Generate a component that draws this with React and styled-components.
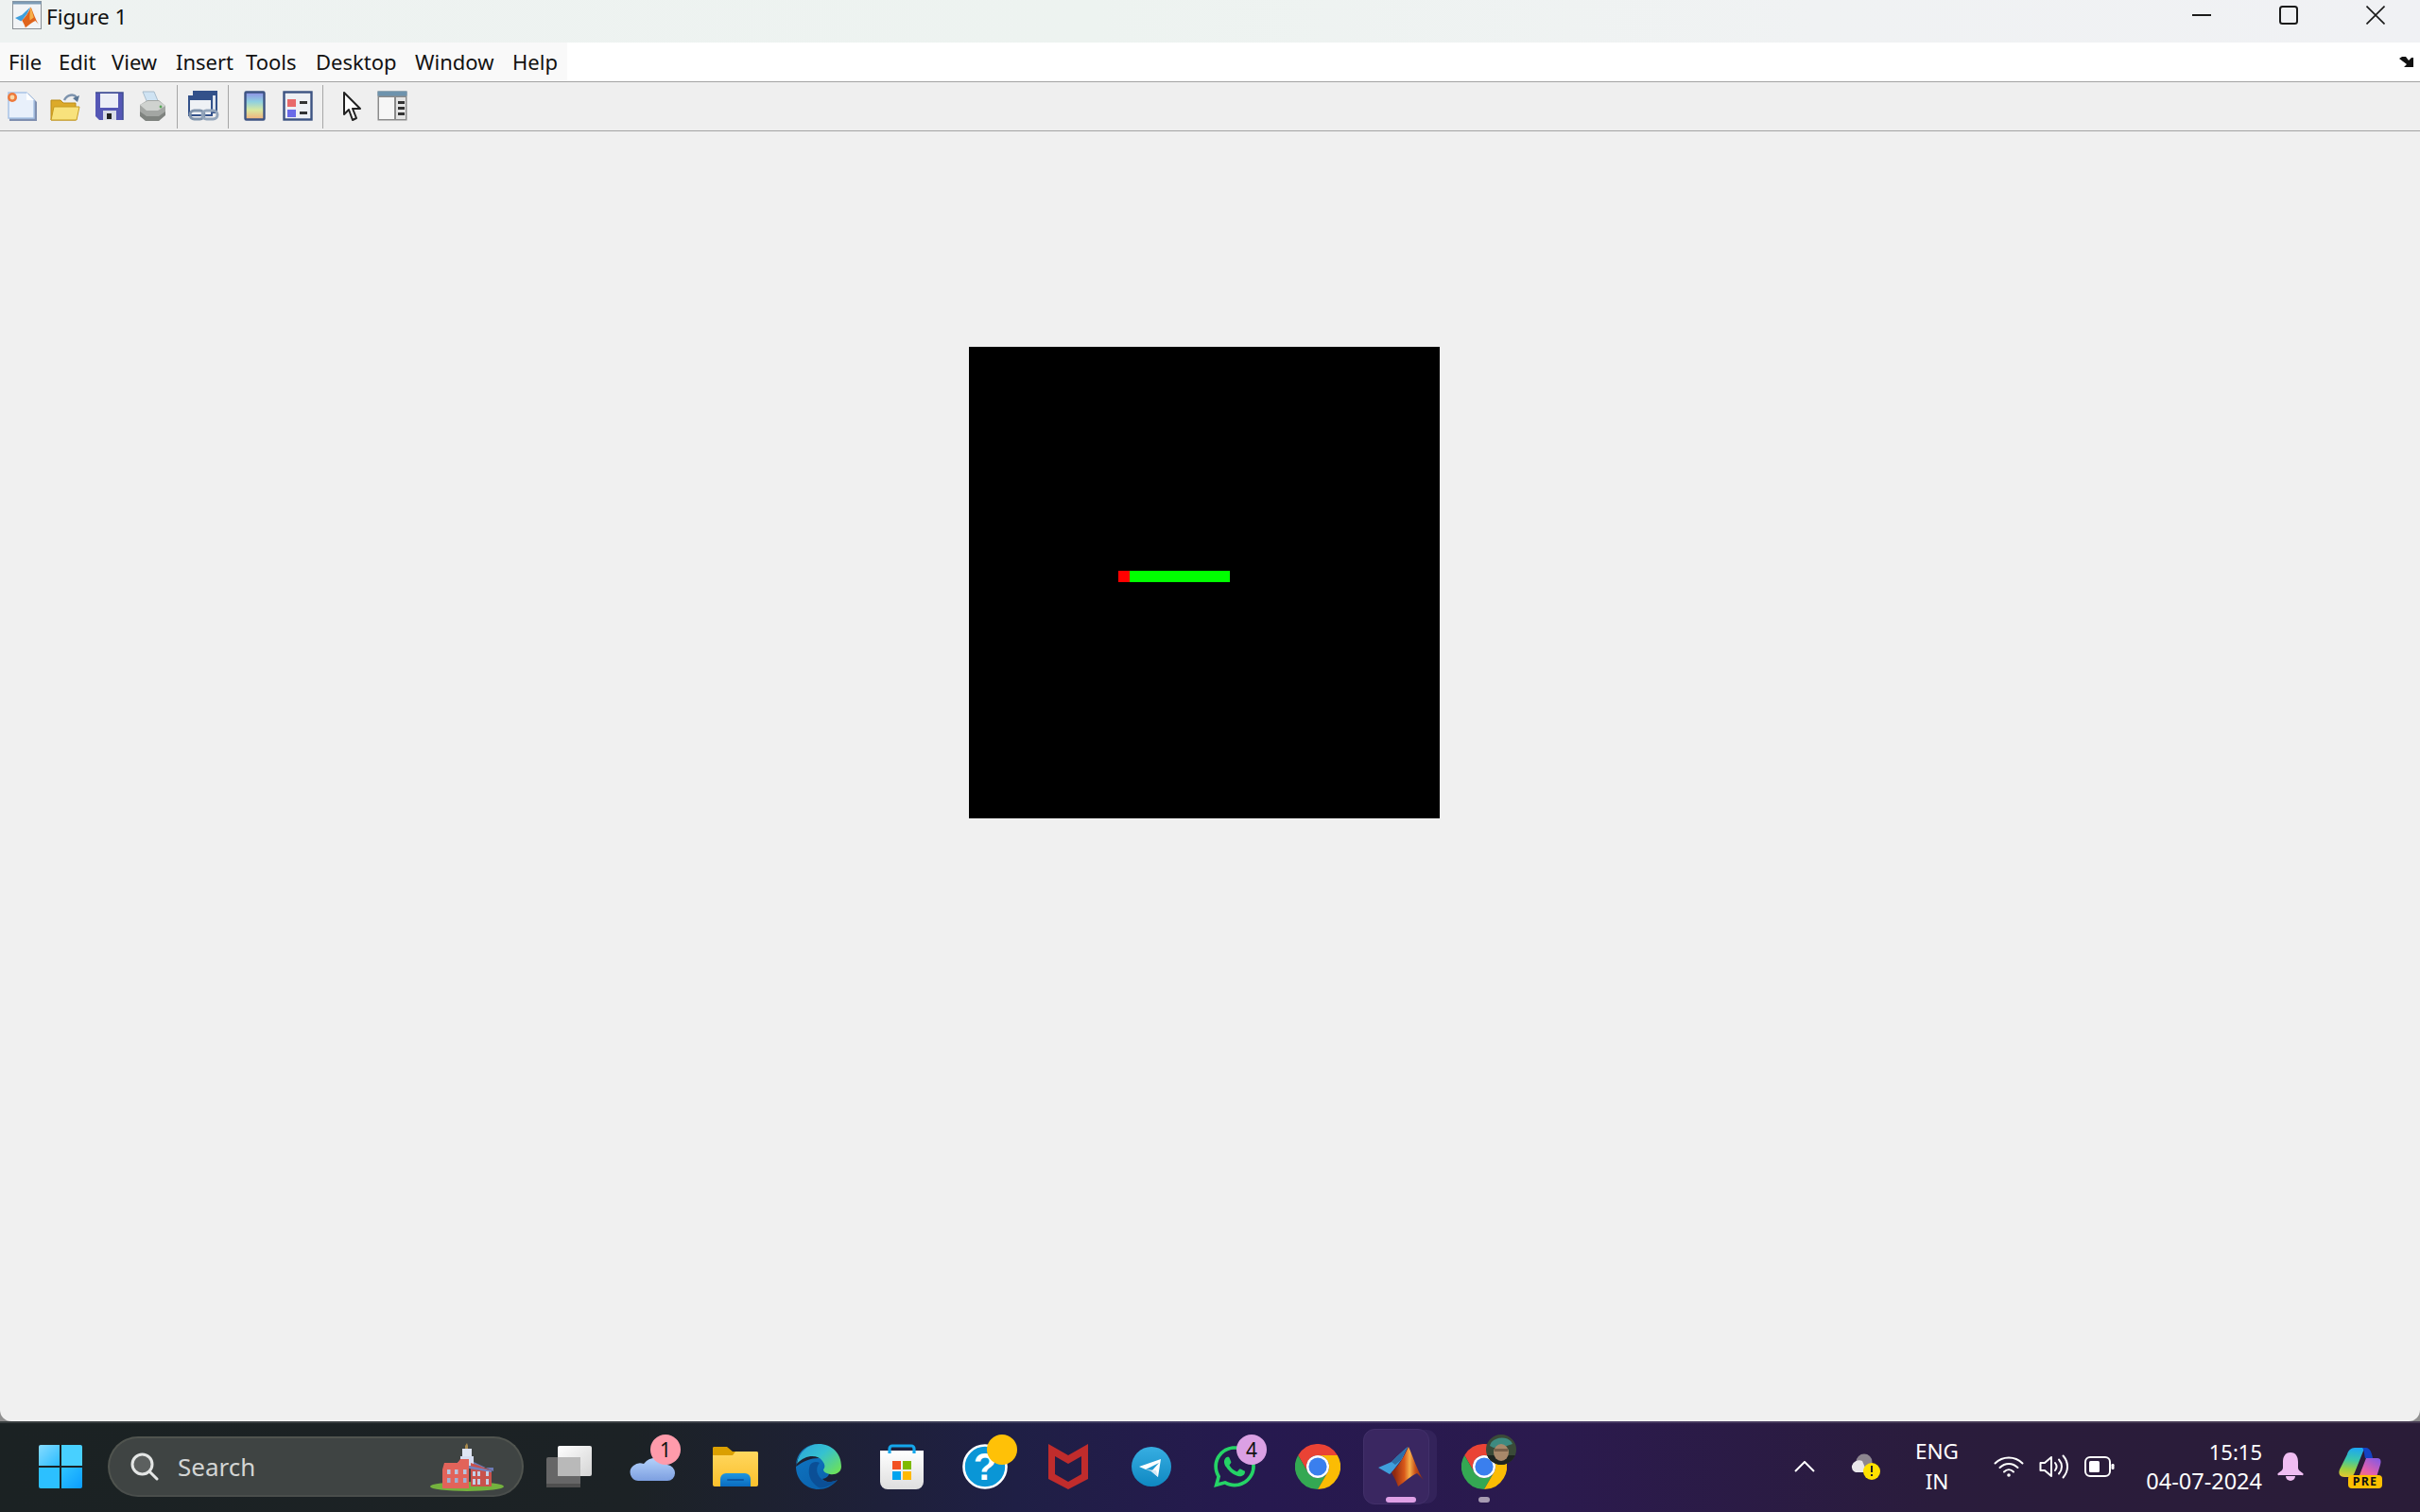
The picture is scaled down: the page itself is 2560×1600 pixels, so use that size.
import React from "react"
import styled, { createGlobalStyle } from "styled-components"
import { FaWhatsapp } from "react-icons/fa"

const GlobalStyle = createGlobalStyle`
  html, body {
    margin: 0;
    padding: 0;
    background: #8f8f8f;
    font-family: "Noto Sans", "Open Sans", sans-serif;
  }
`

const Screen = styled.div`
  width: 2560px;
  height: 1600px;
  display: flex;
  flex-direction: column;
  overflow: hidden;
`

const TitleBar = styled.header`
  height: 45px;
  flex: none;
  display: flex;
  align-items: flex-start;
  background: linear-gradient(90deg, #eef2f1 0%, #edf3f0 45%, #f0f2f3 75%, #f0f1f4 100%);
`

const TitleIcon = styled.div`
  width: 31px;
  height: 30px;
  margin: 1px 5px 0 13px;
  display: flex;
`

const TitleText = styled.span`
  font-size: 22.5px;
  line-height: 36px;
  color: #111;
`

const WindowControls = styled.div`
  margin-left: auto;
  display: flex;
  padding-right: 1px;
`

const WindowControl = styled.div`
  width: 92px;
  height: 32px;
  display: flex;
  align-items: center;
  justify-content: center;
`

const MenuBar = styled.nav`
  height: 41px;
  flex: none;
  display: flex;
  align-items: center;
  justify-content: space-between;
  background: #fff;
  border-bottom: 1px solid #a3a3a3;
`

const MenuList = styled.ul`
  list-style: none;
  margin: 0;
  padding: 0 0 0 9px;
  box-sizing: border-box;
  height: 100%;
  width: 600px;
  display: grid;
  grid-template-columns: 53px 56px 68px 74px 74px 105px 103px auto;
  align-items: center;
  background: #f9f9f9;
`

const MenuItem = styled.li`
  font-size: 22px;
  color: #111;
  position: relative;
  top: -1px;
`

const DockArrow = styled.div`
  display: flex;
  margin-right: 7px;
`

const ToolBar = styled.div`
  height: 51px;
  flex: none;
  display: flex;
  align-items: center;
  background: #efefef;
  border-bottom: 1px solid #a3a3a3;
`

const ToolButton = styled.div`
  width: ${(p) => p.$w || 46}px;
  height: 51px;
  display: flex;
  align-items: center;
  justify-content: center;
  filter: blur(0.6px);
`

const ToolSep = styled.div`
  width: 1px;
  height: 46px;
  background: #a6a6a6;
  margin-left: ${(p) => p.$before}px;
  margin-right: ${(p) => p.$after}px;
`

const FigureArea = styled.main`
  flex: 1;
  background: #f0f0f0;
  border-radius: 0 0 12px 12px;
  padding: 228px 0 0 1025px;
`

const Plot = styled.div`
  width: 498px;
  height: 499px;
  background: #000;
  position: relative;
`

const Snake = styled.div`
  position: absolute;
  left: 158px;
  top: 237px;
  height: 12px;
  display: flex;
`

const SnakeCell = styled.div`
  height: 12px;
  width: ${(p) => p.$w}px;
  background: ${(p) => p.$color};
`

const TaskBar = styled.footer`
  height: 96px;
  flex: none;
  box-sizing: border-box;
  padding: 0 40px 2px 20px;
  display: flex;
  align-items: center;
  border-top: 2px solid rgba(255, 255, 255, 0.13);
  background: linear-gradient(
    90deg,
    #1b2223 0%,
    #1c2225 26%,
    #1f1f45 42%,
    #26194f 52%,
    #2b1a4e 64%,
    #2a1c3c 80%,
    #2a1c38 100%
  );
`

const TaskItem = styled.div`
  width: 88px;
  height: 92px;
  flex: none;
  display: flex;
  align-items: center;
  justify-content: center;
  position: relative;
`

const SearchBox = styled.div`
  width: 440px;
  height: 64px;
  box-sizing: border-box;
  margin: 0 4px 0 6px;
  padding: 0 18px 0 22px;
  flex: none;
  display: flex;
  align-items: center;
  border-radius: 32px;
  background: #3f4443;
  border: 2px solid #50544f;
  border-bottom-color: #4a4e4c;
`

const SearchText = styled.span`
  margin-left: 20px;
  font-size: 26px;
  color: #d3d5d4;
`

const SearchArt = styled.div`
  margin-left: auto;
  display: flex;
  position: relative;
  top: 1px;
`

const Badge = styled.span`
  position: absolute;
  left: ${(p) => p.$x}px;
  top: 12px;
  width: 32px;
  height: 32px;
  border-radius: 50%;
  background: ${(p) => p.$color};
  color: #111;
  font-size: 21px;
  line-height: 32px;
  text-align: center;
`

const Avatar = styled.div`
  position: absolute;
  left: 46px;
  top: 12px;
  display: flex;
`

const ActiveTab = styled.div`
  position: absolute;
  left: 4px;
  top: 6px;
  width: 70px;
  height: 80px;
  border-radius: 12px;
  background: #3a2761;
  border: 1px solid #42306a;
  box-sizing: border-box;
  box-shadow: 9px 0 0 -1px #33235a;
`

const TabIcon = styled.div`
  position: relative;
  display: flex;
`

const RunDot = styled.div`
  position: absolute;
  left: 50%;
  bottom: 8px;
  height: 6px;
  width: ${(p) => p.$w}px;
  margin-left: ${(p) => -p.$w / 2}px;
  border-radius: 3px;
  background: ${(p) => p.$color};
`

const Tray = styled.div`
  margin-left: auto;
  display: flex;
  align-items: center;
  color: #fff;
`

const TrayIcon = styled.div`
  width: ${(p) => p.$w || 48}px;
  height: 48px;
  margin-left: ${(p) => p.$ml || 0}px;
  display: flex;
  align-items: center;
  justify-content: center;
  position: relative;
`

const Lang = styled.div`
  width: 80px;
  margin-left: 12px;
  text-align: center;
  font-size: 22.5px;
  line-height: 32px;
`

const Clock = styled.div`
  width: 133px;
  margin-left: 15px;
  text-align: right;
  line-height: 31px;
`

const ClockLine = styled.div`
  font-size: ${(p) => p.$size}px;
  white-space: nowrap;
`

const PreTag = styled.span`
  position: absolute;
  left: 12px;
  top: 33px;
  width: 36px;
  height: 14px;
  border-radius: 4px;
  background: #ffc000;
  color: #111;
  font-size: 12.5px;
  font-weight: 700;
  line-height: 14px;
  letter-spacing: 1.2px;
  text-align: center;
`

const MatlabGlyph = ({ size = 48 }) => (
  <svg width={size} height={(size * 44) / 48} viewBox="0 0 48 44">
    <defs>
      <linearGradient id="mlBody" x1="0.1" y1="0.5" x2="0.95" y2="0.5">
        <stop offset="0" stopColor="#8f2a12" />
        <stop offset="0.35" stopColor="#d9591a" />
        <stop offset="0.55" stopColor="#f6b04a" />
        <stop offset="0.75" stopColor="#c9521a" />
        <stop offset="1" stopColor="#8a2a10" />
      </linearGradient>
    </defs>
    <polygon points="0,23 14,17 20,11 31,1 25,14 15,27 12,30" fill="#3f9fdc" />
    <polygon points="14,17 20,11 31,1 24,15 18,20" fill="#2c6fa8" />
    <path d="M32 1 C37 12 42 28 48 36 L41 29 C34 32 28 38 21 43 C19 37 16 32 14 28 C21 22 27 12 32 1Z" fill="url(#mlBody)" />
  </svg>
)

const ChromeGlyph = () => (
  <svg width="48" height="48" viewBox="0 0 48 48">
    <path d="M3.2 12A24 24 0 0 1 44.8 12H24A12 12 0 0 0 13.6 30Z" fill="#ea4335" />
    <path d="M3.2 12L13.6 30A12 12 0 0 0 34.4 30L24 48A24 24 0 0 1 3.2 12Z" fill="#34a853" />
    <path d="M44.8 12H24A12 12 0 0 1 34.4 30L24 48A24 24 0 0 0 44.8 12Z" fill="#fbbc04" />
    <circle cx="24" cy="24" r="12" fill="#fff" />
    <circle cx="24" cy="24" r="9.6" fill="#3a7fee" />
  </svg>
)

const toolIcons = {
  page: (
    <svg width="34" height="33" viewBox="0 0 34 33">
      <path d="M4 3H24L33 12V32H4Z" fill="#7f8fb0" />
      <path d="M3 2H22L30 10V29H3Z" fill="#e8f0fb" stroke="#a9c3e6" strokeWidth="1.5" />
      <path d="M22 2L30 10H22Z" fill="#fff" />
      <circle cx="7" cy="7" r="5" fill="#ee7a3c" />
      <circle cx="7" cy="7" r="2.4" fill="#f9d9a8" />
    </svg>
  ),
  folder: (
    <svg width="32" height="32" viewBox="0 0 32 32">
      <path d="M1 9H11L14 12H27V30H1Z" fill="#dcaa2a" stroke="#b98a17" />
      <path d="M1 30L4 16H31L28 30Z" fill="#f8e27c" stroke="#c79a1e" />
      <path d="M15 9C18 3 25 2 28 6" fill="none" stroke="#7d93ad" strokeWidth="2.4" />
      <path d="M31 4L29 11L24 7Z" fill="#5b7795" />
    </svg>
  ),
  save: (
    <svg width="31" height="31" viewBox="0 0 31 31">
      <path d="M1 1H30V30H5L1 26Z" fill="#5557b5" />
      <path d="M1 1H30V30" fill="none" stroke="#3f4d92" strokeWidth="1.5" />
      <rect x="6" y="2" width="19" height="15" fill="#eceef7" />
      <rect x="9" y="20" width="14" height="10" fill="#d8dbe8" />
      <rect x="13" y="23" width="5" height="6" fill="#222" />
    </svg>
  ),
  print: (
    <svg width="30" height="33" viewBox="0 0 30 33">
      <path d="M5 1H17L22 13H10Z" fill="#cfe3f3" stroke="#a9bccb" />
      <path d="M2 15L10 10H22L29 16V25L22 31H8L2 26Z" fill="#a3a6a3" />
      <path d="M2 15L10 11H22L29 16L21 21H9Z" fill="#cfd2cf" />
      <path d="M2 22L9 27H22L29 22V26L22 32H8L2 27Z" fill="#7f837f" />
      <circle cx="24" cy="17" r="1.4" fill="#58a858" />
    </svg>
  ),
  link: (
    <svg width="33" height="33" viewBox="0 0 33 33">
      <rect x="6" y="1" width="24" height="22" fill="#dfe6ef" stroke="#33518a" strokeWidth="2" />
      <rect x="6" y="1" width="24" height="4" fill="#33518a" />
      <rect x="1" y="6" width="24" height="20" fill="#eef1f5" stroke="#33518a" strokeWidth="2" />
      <rect x="1" y="6" width="24" height="4" fill="#33518a" />
      <rect x="2" y="21" width="15" height="9" rx="4.5" fill="none" stroke="#7f93ac" strokeWidth="3" />
      <rect x="15" y="21" width="16" height="9" rx="4.5" fill="none" stroke="#93a5bb" strokeWidth="3" />
    </svg>
  ),
  colorbar: (
    <svg width="23" height="33" viewBox="0 0 23 33">
      <defs>
        <linearGradient id="cbar" x1="0" y1="0" x2="0" y2="1">
          <stop offset="0" stopColor="#8f8fe6" />
          <stop offset="0.35" stopColor="#8fd0e0" />
          <stop offset="0.65" stopColor="#d8e8a0" />
          <stop offset="1" stopColor="#f2ae7a" />
        </linearGradient>
      </defs>
      <rect x="1.5" y="1.5" width="20" height="29" rx="1" fill="url(#cbar)" stroke="#3c5382" strokeWidth="2.4" />
    </svg>
  ),
  legend: (
    <svg width="32" height="33" viewBox="0 0 32 33">
      <rect x="1.5" y="1.5" width="29" height="29" fill="#eef0f4" stroke="#3c5382" strokeWidth="2.4" />
      <rect x="5" y="9" width="9" height="8" fill="#e86a6a" />
      <rect x="5" y="20" width="9" height="8" fill="#6a6ae8" />
      <rect x="18" y="11" width="8" height="3" fill="#333" />
      <rect x="18" y="22" width="8" height="3" fill="#333" />
    </svg>
  ),
  cursor: (
    <svg width="21" height="33" viewBox="0 0 21 33">
      <path d="M2 2V25L7 20L11 31L15 29L11 19H19Z" fill="#fff" stroke="#222" strokeWidth="2" strokeLinejoin="round" />
    </svg>
  ),
  panel: (
    <svg width="32" height="33" viewBox="0 0 32 33">
      <rect x="0.5" y="0.5" width="31" height="31" fill="#8b8b8b" />
      <rect x="0.5" y="0.5" width="31" height="5" fill="#6e93ad" />
      <rect x="2" y="7" width="16" height="23" fill="#f6f6f6" />
      <rect x="20" y="7" width="10" height="23" fill="#e4e4e4" />
      <rect x="22" y="11" width="7" height="3" fill="#333" />
      <rect x="22" y="17" width="7" height="3" fill="#333" />
      <rect x="22" y="23" width="7" height="3" fill="#333" />
    </svg>
  ),
}

const WinLogo = () => (
  <svg width="46" height="46" viewBox="0 0 46 46">
    <defs>
      <linearGradient id="winA" x1="0" y1="0" x2="1" y2="1">
        <stop offset="0" stopColor="#86dcff" />
        <stop offset="1" stopColor="#2bbcff" />
      </linearGradient>
      <linearGradient id="winB" x1="0" y1="0" x2="1" y2="1">
        <stop offset="0" stopColor="#2fc4ff" />
        <stop offset="1" stopColor="#0b9dff" />
      </linearGradient>
    </defs>
    <path d="M2 0H22V22H0V2A2 2 0 0 1 2 0Z" fill="url(#winA)" />
    <path d="M24 0H44A2 2 0 0 1 46 2V22H24Z" fill="#48d0ff" />
    <path d="M0 24H22V46H2A2 2 0 0 1 0 44Z" fill="#2cc0ff" />
    <path d="M24 24H46V44A2 2 0 0 1 44 46H24Z" fill="url(#winB)" />
  </svg>
)

const Magnifier = () => (
  <svg width="30" height="30" viewBox="0 0 30 30">
    <circle cx="12.5" cy="12.5" r="10.5" fill="#5c605f" stroke="#e4e6e5" strokeWidth="3" />
    <line x1="20.5" y1="20.5" x2="28" y2="28" stroke="#e4e6e5" strokeWidth="3" strokeLinecap="round" />
  </svg>
)

const Building = () => (
  <svg width="80" height="52" viewBox="0 0 80 52">
    <ellipse cx="40" cy="46" rx="39" ry="5" fill="#74b23e" />
    <path d="M38 3L40 0L41 3V12H38Z" fill="#a98a4e" />
    <rect x="35" y="6" width="10" height="14" fill="#dfe5f3" />
    <path d="M30 20H47L68 30V26H30Z" fill="#6d7bb8" />
    <path d="M33 14H47V24H33Z" fill="#d5dcf0" />
    <path d="M44 21L66 29V46H44Z" fill="#c9524c" />
    <path d="M16 21H30L33 17H42V48H14V28Z" fill="#e2635a" />
    <path d="M42 24L66 29V31L42 27Z" fill="#7482bf" />
    {[19, 27, 36].map((x) => (
      <React.Fragment key={x}>
        <rect x={x} y="28" width="3.5" height="5" fill="#b7c5df" />
        <rect x={x} y="37" width="3.5" height="5" fill="#9fb0d2" />
      </React.Fragment>
    ))}
    {[46, 51, 60].map((x) => (
      <React.Fragment key={x}>
        <rect x={x} y="30" width="3" height="5" fill="#c4d0e6" />
        <rect x={x} y="38" width="3" height="6" fill="#c4d0e6" />
      </React.Fragment>
    ))}
  </svg>
)

const TaskView = () => (
  <svg width="48" height="44" viewBox="0 0 48 44">
    <defs>
      <linearGradient id="tvFront" x1="0" y1="0" x2="1" y2="1">
        <stop offset="0" stopColor="#ffffff" />
        <stop offset="1" stopColor="#d4d4d4" />
      </linearGradient>
    </defs>
    <rect x="12" y="0" width="36" height="32" rx="2" fill="url(#tvFront)" />
    <rect x="0" y="12" width="36" height="32" rx="2" fill="#6d6d6d" fillOpacity="0.92" />
    <rect x="12" y="12" width="24" height="20" fill="#b9b9b9" />
    <rect x="0" y="40" width="36" height="4" fill="#4f4f4f" />
  </svg>
)

const CloudIcon = () => (
  <svg width="48" height="30" viewBox="0 0 48 30">
    <defs>
      <linearGradient id="cloud" x1="0" y1="0" x2="0" y2="1">
        <stop offset="0" stopColor="#b4d2fb" />
        <stop offset="1" stopColor="#7d9fe0" />
      </linearGradient>
    </defs>
    <path d="M9 30A9 9 0 0 1 4 14A11 11 0 0 1 15 12A15 15 0 0 1 40 13A9 9 0 0 1 48 22A8 8 0 0 1 40 30Z" fill="url(#cloud)" />
  </svg>
)

const FolderIcon = () => (
  <svg width="48" height="42" viewBox="0 0 48 42">
    <defs>
      <linearGradient id="fld" x1="0" y1="0" x2="0" y2="1">
        <stop offset="0" stopColor="#ffd75e" />
        <stop offset="1" stopColor="#fbc02d" />
      </linearGradient>
      <linearGradient id="fldTab" x1="0" y1="0" x2="0" y2="1">
        <stop offset="0" stopColor="#1e96e0" />
        <stop offset="1" stopColor="#0a6cc0" />
      </linearGradient>
    </defs>
    <path d="M0 3A2 2 0 0 1 2 0H15L21 5H46A2 2 0 0 1 48 7V12H0Z" fill="#dba000" />
    <path d="M0 9H21L24 5H46A2 2 0 0 1 48 7V40A2 2 0 0 1 46 42H2A2 2 0 0 1 0 40Z" fill="url(#fld)" />
    <path d="M8 42V34A6 6 0 0 1 14 28H34A6 6 0 0 1 40 34V42Z" fill="url(#fldTab)" />
    <rect x="15" y="34" width="18" height="2" rx="1" fill="#0a5aa8" />
  </svg>
)

const EdgeIcon = () => (
  <svg width="48" height="48" viewBox="0 0 48 48">
    <defs>
      <linearGradient id="edgeTop" x1="0" y1="0" x2="1" y2="0.8">
        <stop offset="0" stopColor="#2ba3dc" />
        <stop offset="0.5" stopColor="#35c1d1" />
        <stop offset="1" stopColor="#6be05c" />
      </linearGradient>
      <linearGradient id="edgeBase" x1="0" y1="0" x2="0.6" y2="1">
        <stop offset="0" stopColor="#0f79c6" />
        <stop offset="1" stopColor="#0b62ad" />
      </linearGradient>
    </defs>
    <path d="M24 0C10 0 0 10 0 24C0 38 11 48 24 48C31 48 38 45 44 38C37 41 32 41 28 37C34 36 36 32 36 26C36 20 30 15 24 15C16 15 8 18 0 24C2 10 12 0 24 0Z" fill="url(#edgeBase)" />
    <path d="M1 21C3 8 13 0 24 0C38 0 48 10 48 24C48 30 42 33 36 32C31 31 29 29 29 27C31 25 31 22 28 18C23 11 10 11 1 21Z" fill="url(#edgeTop)" />
    <path d="M15 22C12 30 14 40 24 46C30 47 37 44 44 38C37 41 31 41 27 37C21 32 21 24 25 20C22 18 17 19 15 22Z" fill="#0b4f96" />
  </svg>
)

const StoreIcon = () => (
  <svg width="46" height="48" viewBox="0 0 46 48">
    <defs>
      <linearGradient id="bag" x1="0" y1="0" x2="0" y2="1">
        <stop offset="0" stopColor="#ffffff" />
        <stop offset="1" stopColor="#dedede" />
      </linearGradient>
    </defs>
    <path d="M0 7H46V40A8 8 0 0 1 38 48H8A8 8 0 0 1 0 40Z" fill="url(#bag)" />
    <path d="M10 10V5A3 3 0 0 1 13 2H33A3 3 0 0 1 36 5V10" fill="none" stroke="#14a7ec" strokeWidth="3.2" />
    <rect x="13" y="18" width="9" height="9" fill="#f25022" />
    <rect x="24" y="18" width="9" height="9" fill="#7fba00" />
    <rect x="13" y="29" width="9" height="9" fill="#00a4ef" />
    <rect x="24" y="29" width="9" height="9" fill="#ffb900" />
  </svg>
)

const HelpIcon = () => (
  <svg width="48" height="48" viewBox="0 0 48 48">
    <circle cx="24" cy="24" r="22.5" fill="#0a96d6" stroke="#fff" strokeWidth="2.6" />
    <text x="24" y="38" textAnchor="middle" fontFamily="'Liberation Sans', sans-serif" fontSize="40" fontWeight="700" fill="#fff">?</text>
  </svg>
)

const McAfeeIcon = () => (
  <svg width="42" height="48" viewBox="0 0 42 48">
    <path fillRule="evenodd" d="M0 0L21 12L42 0V37L21 48L0 37ZM7 13V32L21 40L35 32V13L21 21Z" fill="#c02c2c" />
  </svg>
)

const TelegramIcon = () => (
  <svg width="42" height="42" viewBox="0 0 42 42">
    <defs>
      <linearGradient id="tg" x1="0" y1="0" x2="0" y2="1">
        <stop offset="0" stopColor="#37aee2" />
        <stop offset="1" stopColor="#0f88c2" />
      </linearGradient>
    </defs>
    <circle cx="21" cy="21" r="21" fill="url(#tg)" />
    <path d="M8 21L31 13L28 32L21 26L29 17L15 24Z" fill="#fff" />
    <path d="M15 24L21 26L28 32L26 25Z" fill="#d5e8f4" />
  </svg>
)

const AvatarPic = () => (
  <svg width="32" height="32" viewBox="0 0 32 32">
    <defs>
      <clipPath id="avClip">
        <circle cx="16" cy="16" r="16" />
      </clipPath>
    </defs>
    <g clipPath="url(#avClip)">
      <rect width="32" height="32" fill="#3a4a38" />
      <rect y="22" width="32" height="10" fill="#1e2420" />
      <path d="M4 12C6 2 24 0 28 10L22 12L8 14Z" fill="#3d8a80" />
      <ellipse cx="16" cy="19" rx="8" ry="9" fill="#a8886a" />
      <rect x="9" y="15" width="14" height="3" fill="#5b4636" opacity="0.6" />
    </g>
  </svg>
)

const TrayCloud = () => (
  <svg width="32" height="28" viewBox="0 0 32 28">
    <circle cx="15" cy="9" r="8.5" fill="#8d8690" />
    <path d="M2 13A8 8 0 0 1 13 8L18 20H6A6 6 0 0 1 2 13Z" fill="#e9e7ea" />
    <circle cx="23" cy="19" r="9" fill="#ffe100" />
    <rect x="22" y="13" width="2" height="7" fill="#222" />
    <rect x="22" y="22" width="2" height="2" fill="#222" />
  </svg>
)

const Wifi = () => (
  <svg width="32" height="24" viewBox="0 0 32 24" fill="none" stroke="#fff" strokeWidth="2" strokeLinecap="round">
    <path d="M1.5 8.5C9.5 0.5 22.5 0.5 30.5 8.5" />
    <path d="M6.5 13C12 7.5 20 7.5 25.5 13" />
    <path d="M11 17.5C14 14.5 18 14.5 21 17.5" />
    <circle cx="16" cy="21" r="1.8" fill="#fff" stroke="none" />
  </svg>
)

const Volume = () => (
  <svg width="32" height="28" viewBox="0 0 32 28" fill="none" stroke="#fff" strokeWidth="2" strokeLinejoin="round" strokeLinecap="round">
    <path d="M1.5 10H6L13 4V24L6 18H1.5Z" />
    <path d="M17 10C19 12.5 19 15.5 17 18" />
    <path d="M21 6.5C25 11 25 17 21 21.5" />
    <path d="M25.5 2.5C31.5 9.5 31.5 18.5 25.5 25.5" />
  </svg>
)

const Battery = () => (
  <svg width="32" height="22" viewBox="0 0 32 22">
    <rect x="1" y="1" width="26" height="20" rx="5" fill="none" stroke="#fff" strokeWidth="2" />
    <rect x="5" y="5" width="11" height="12" rx="1.5" fill="#fff" />
    <rect x="28.5" y="8" width="3" height="6" rx="1.2" fill="#fff" />
  </svg>
)

const Bell = () => (
  <svg width="28" height="30" viewBox="0 0 28 30">
    <path d="M14 0C8 0 6 5 6 10V16C6 19 3 20 1 22A1 1 0 0 0 2 24H26A1 1 0 0 0 27 22C25 20 22 19 22 16V10C22 5 20 0 14 0Z" fill="#f0bdf2" />
    <path d="M9 25H19A5 5 0 0 1 9 25Z" fill="#f0bdf2" />
  </svg>
)

const Copilot = () => (
  <svg width="46" height="42" viewBox="0 0 46 42">
    <defs>
      <linearGradient id="copA" x1="0.3" y1="0" x2="0.2" y2="1">
        <stop offset="0" stopColor="#1ea8f0" />
        <stop offset="0.4" stopColor="#3cc8a8" />
        <stop offset="0.72" stopColor="#9cd040" />
        <stop offset="1" stopColor="#e8c830" />
      </linearGradient>
      <linearGradient id="copB" x1="0.8" y1="0" x2="0.2" y2="1">
        <stop offset="0" stopColor="#8a5ae0" />
        <stop offset="0.55" stopColor="#e860a8" />
        <stop offset="1" stopColor="#f68a4a" />
      </linearGradient>
    </defs>
    <path d="M30 1H18C14 1 11 4 10 8L2 24C0 29 3 32 7 32H12C15 32 17 30 18 27L26 7C27 4 28 2 30 1Z" fill="url(#copA)" />
    <path d="M26 1H30C34 1 36 6 37 12H29C28 8 28 3 26 1Z" fill="#1343c4" />
    <path d="M30 12H42C46 12 46 16 45 19L41 32C40 36 37 38 33 38H18C21 36 22 33 23 30Z" fill="url(#copB)" />
  </svg>
)

const menus = ["File", "Edit", "View", "Insert", "Tools", "Desktop", "Window", "Help"]

const App = () => (
  <Screen>
    <GlobalStyle />
    <TitleBar>
      <TitleIcon>
        <svg width="31" height="30" viewBox="0 0 31 30">
          <rect x="0.5" y="0.5" width="30" height="29" fill="#f2f4f6" stroke="#8a8f95" />
          <rect x="0.5" y="0.5" width="30" height="3" fill="#7d9cb6" />
          <g transform="translate(3 6) scale(0.52)">
            <polygon points="0,23 14,17 20,11 31,1 25,14 15,27 12,30" fill="#3f9fdc" />
            <path d="M32 1C37 12 42 28 48 36L41 29C34 32 28 38 21 43C19 37 16 32 14 28C21 22 27 12 32 1Z" fill="#e0641c" />
            <path d="M32 1C34 8 36 14 38 22L30 28C29 20 30 10 32 1Z" fill="#f6b04a" />
          </g>
        </svg>
      </TitleIcon>
      <TitleText>Figure 1</TitleText>
      <WindowControls>
        <WindowControl>
          <svg width="20" height="2" viewBox="0 0 20 2">
            <rect width="20" height="2" fill="#1a1a1a" />
          </svg>
        </WindowControl>
        <WindowControl>
          <svg width="20" height="20" viewBox="0 0 20 20">
            <rect x="1" y="1" width="18" height="18" rx="2.5" fill="none" stroke="#1a1a1a" strokeWidth="2" />
          </svg>
        </WindowControl>
        <WindowControl>
          <svg width="20" height="20" viewBox="0 0 20 20">
            <path d="M0.5 0.5L19.5 19.5M19.5 0.5L0.5 19.5" stroke="#1a1a1a" strokeWidth="1.6" />
          </svg>
        </WindowControl>
      </WindowControls>
    </TitleBar>

    <MenuBar>
      <MenuList>
        {menus.map((m) => (
          <MenuItem key={m}>{m}</MenuItem>
        ))}
      </MenuList>
      <DockArrow>
        <svg width="15" height="11" viewBox="0 0 15 11">
          <path d="M0 2L3 0H7L10 4L13 1H15V11H5L8 8Z" fill="#111" />
        </svg>
      </DockArrow>
    </MenuBar>

    <ToolBar>
      <ToolButton>{toolIcons.page}</ToolButton>
      <ToolButton>{toolIcons.folder}</ToolButton>
      <ToolButton>{toolIcons.save}</ToolButton>
      <ToolButton>{toolIcons.print}</ToolButton>
      <ToolSep $before={3} $after={4} />
      <ToolButton>{toolIcons.link}</ToolButton>
      <ToolSep $before={3} $after={5} />
      <ToolButton $w={45}>{toolIcons.colorbar}</ToolButton>
      <ToolButton $w={45}>{toolIcons.legend}</ToolButton>
      <ToolSep $before={4} $after={7} />
      <ToolButton>{toolIcons.cursor}</ToolButton>
      <ToolButton $w={40}>{toolIcons.panel}</ToolButton>
    </ToolBar>

    <FigureArea>
      <Plot>
        <Snake>
          <SnakeCell $w={12} $color="#ff0000" />
          <SnakeCell $w={106} $color="#00ff00" />
        </Snake>
      </Plot>
    </FigureArea>

    <TaskBar>
      <TaskItem>
        <WinLogo />
      </TaskItem>
      <SearchBox>
        <Magnifier />
        <SearchText>Search</SearchText>
        <SearchArt>
          <Building />
        </SearchArt>
      </SearchBox>
      <TaskItem>
        <TaskView />
      </TaskItem>
      <TaskItem>
        <CloudIcon />
        <Badge $x={42} $color="#ff9bab">1</Badge>
      </TaskItem>
      <TaskItem>
        <FolderIcon />
      </TaskItem>
      <TaskItem>
        <EdgeIcon />
      </TaskItem>
      <TaskItem>
        <StoreIcon />
      </TaskItem>
      <TaskItem>
        <HelpIcon />
        <Badge $x={46} $color="#ffc107" />
      </TaskItem>
      <TaskItem>
        <McAfeeIcon />
      </TaskItem>
      <TaskItem>
        <TelegramIcon />
      </TaskItem>
      <TaskItem>
        <FaWhatsapp size={50} color="#25d366" />
        <Badge $x={46} $color="#dba0e4">4</Badge>
      </TaskItem>
      <TaskItem>
        <ChromeGlyph />
      </TaskItem>
      <TaskItem>
        <ActiveTab />
        <TabIcon>
          <MatlabGlyph />
        </TabIcon>
        <RunDot $w={32} $color="#dfa0e6" />
      </TaskItem>
      <TaskItem>
        <ChromeGlyph />
        <Avatar>
          <AvatarPic />
        </Avatar>
        <RunDot $w={12} $color="#a79bb2" />
      </TaskItem>

      <Tray>
        <TrayIcon>
          <svg width="22" height="12" viewBox="0 0 22 12" fill="none" stroke="#fff" strokeWidth="2">
            <path d="M1 11L11 1L21 11" />
          </svg>
        </TrayIcon>
        <TrayIcon $ml={16}>
          <TrayCloud />
        </TrayIcon>
        <Lang>
          ENG
          <br />
          IN
        </Lang>
        <TrayIcon $ml={12}>
          <Wifi />
        </TrayIcon>
        <TrayIcon>
          <Volume />
        </TrayIcon>
        <TrayIcon>
          <Battery />
        </TrayIcon>
        <Clock>
          <ClockLine $size={22}>15:15</ClockLine>
          <ClockLine $size={23.5}>04-07-2024</ClockLine>
        </Clock>
        <TrayIcon $ml={6}>
          <Bell />
        </TrayIcon>
        <TrayIcon $ml={25}>
          <Copilot />
          <PreTag>PRE</PreTag>
        </TrayIcon>
      </Tray>
    </TaskBar>
  </Screen>
)

export default App
